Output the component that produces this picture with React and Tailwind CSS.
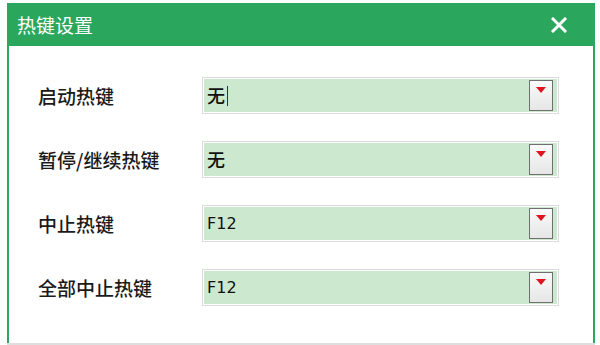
import React from "react";

const rows = [
  { label: "启动热键", value: "无", caret: true },
  { label: "暂停/继续热键", value: "无" },
  { label: "中止热键", value: "F12" },
  { label: "全部中止热键", value: "F12" },
];

function HotkeySelect({ value, caret }) {
  const isCjk = value === "无";
  return (
    <div className="w-[357px] h-[37px] border border-[#dcdcdc] bg-white p-px">
      <div className="h-full bg-[#cce8cf] flex items-center justify-between pl-[3px] pr-[4px]">
        <div className="flex items-center">
          <span
            className={
              isCjk
                ? "text-[18px] text-[#111] font-medium font-['Noto_Sans_CJK_SC',sans-serif]"
                : "text-[16px] text-[#111] font-['DejaVu_Sans',sans-serif]"
            }
          >
            {value}
          </span>
          {caret && <span className="ml-[2px] w-px h-[20px] bg-[#3a2a5c]" />}
        </div>
        <div className="w-[24px] h-[31px] border border-[#707070] bg-gradient-to-b from-[#fafafa] to-[#e6e6e6] flex justify-center pt-[6px]">
          <svg width="10" height="6" viewBox="0 0 10 6">
            <polygon points="0,0 10,0 5,6" fill="#e0141e" />
          </svg>
        </div>
      </div>
    </div>
  );
}

export default function App() {
  return (
    <div className="w-[600px] h-[345px] bg-white pt-[3px] pl-[7px] pr-[5px] flex flex-col font-['Noto_Sans_CJK_SC',sans-serif]">
      <div className="flex-1 flex flex-col border-x-2 border-[#2ca75d]">
        <div className="h-[43px] bg-[#2ba75d] flex items-center justify-between pl-[8px] pr-[26px]">
          <span className="text-[19px] text-white leading-none">热键设置</span>
          <svg width="16" height="16" viewBox="0 0 16 16">
            <path d="M2 2 L14 14 M14 2 L2 14" stroke="#fff" strokeWidth="3" strokeLinecap="square" />
          </svg>
        </div>
        <div className="flex-1 bg-white pt-[31px] pl-[29px] flex flex-col gap-[27px]">
          {rows.map((r) => (
            <div key={r.label} className="flex items-center">
              <span className="w-[164px] text-[19px] font-medium text-[#1a1a1a] leading-none">{r.label}</span>
              <HotkeySelect value={r.value} caret={r.caret} />
            </div>
          ))}
        </div>
      </div>
      <div className="h-[2px] bg-[#dedede]" />
    </div>
  );
}
